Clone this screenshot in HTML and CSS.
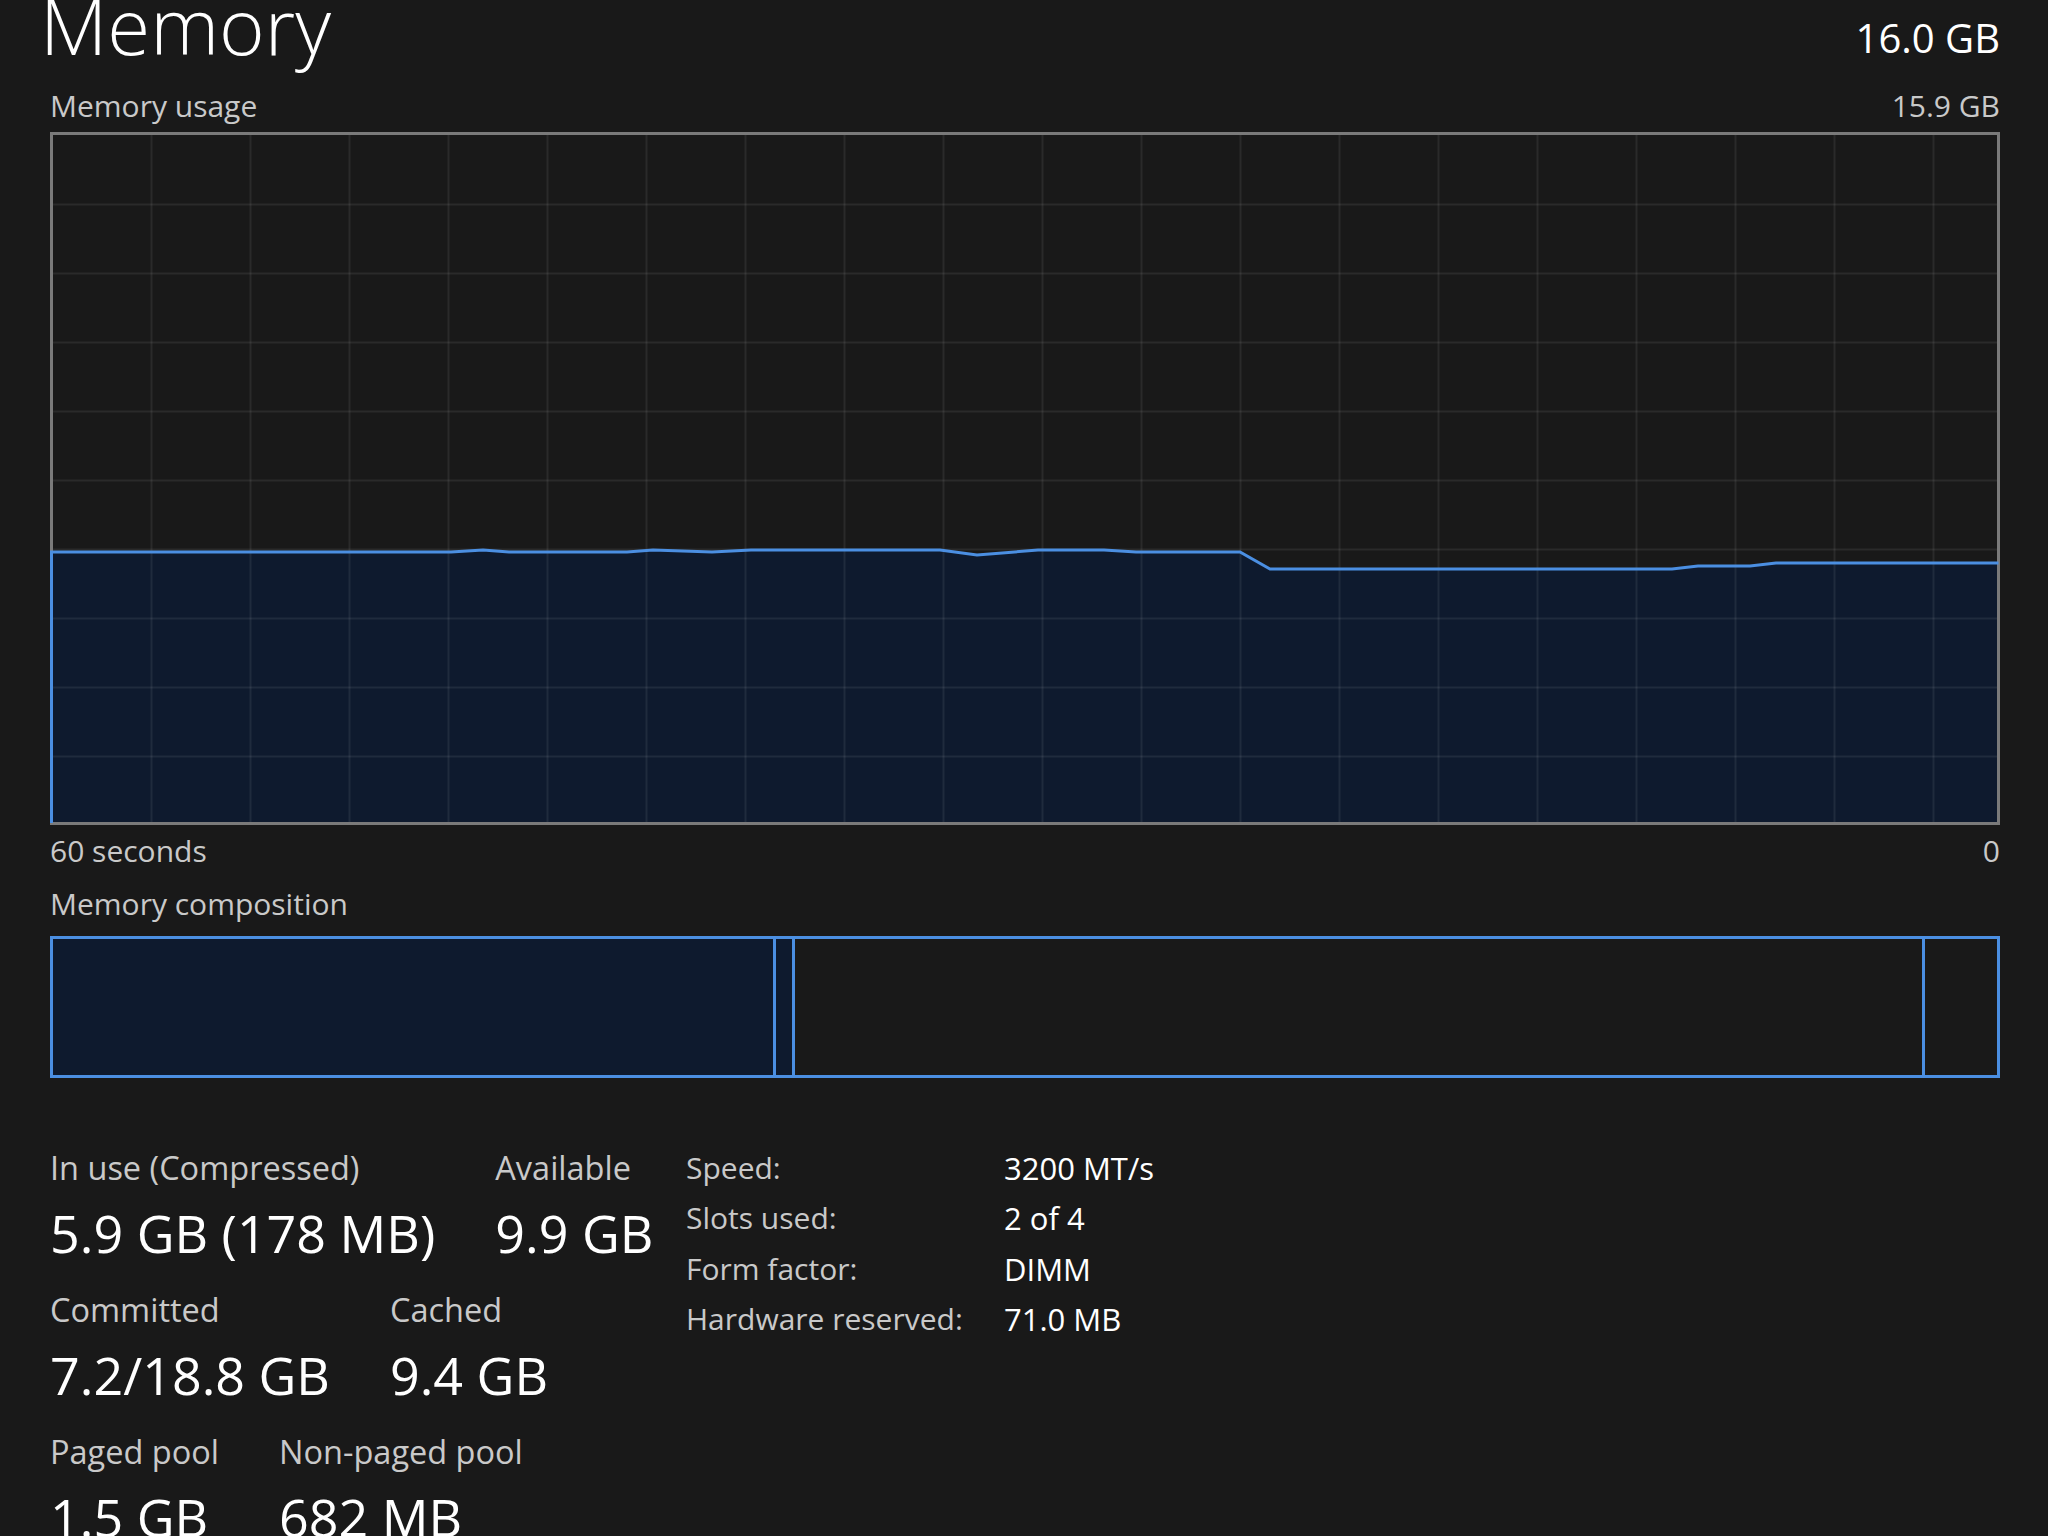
FILE: index.html
```html
<!DOCTYPE html>
<html lang="en">
<head>
  <meta charset="UTF-8">
  <title>Memory</title>
  <link rel="stylesheet" href="styles.css">
</head>
<body>
  <div class="page">
    <div class="header">
      <h1 class="title">Memory</h1>
      <span class="total">16.0 GB</span>
    </div>

    <div class="caption-row usage-row">
      <span>Memory usage</span>
      <span>15.9 GB</span>
    </div>

    <!-- usage graph, last 60 seconds -->
    <div class="graph">
      <svg viewBox="0 0 1950 693" preserveAspectRatio="none">
        <polygon class="usage-fill" points="1.5,420 401,420 433,418 459,420 577,420 603,418 662,420 701,418 890,418 927,423 988,418 1054,418 1086,420 1190,420 1220,437 1622,437 1648,434 1700,434 1726,431 1948.5,431 1948.5,690 1.5,690"/>
        <g class="grid">
          <path d="M101.5 3V690M200.5 3V690M299.5 3V690M398.5 3V690M497.5 3V690M596.5 3V690M695.5 3V690M794.5 3V690M893.5 3V690M992.5 3V690M1091.5 3V690M1190.5 3V690M1289.5 3V690M1388.5 3V690M1487.5 3V690M1586.5 3V690M1685.5 3V690M1784.5 3V690M1883.5 3V690"/>
          <path d="M3 72.5H1947M3 141.5H1947M3 210.5H1947M3 279.5H1947M3 348.5H1947M3 417.5H1947M3 486.5H1947M3 555.5H1947M3 624.5H1947"/>
        </g>
        <rect class="frame" x="1.5" y="1.5" width="1947" height="690"/>
        <polyline class="usage-line" points="1.5,691 1.5,420 401,420 433,418 459,420 577,420 603,418 662,420 701,418 890,418 927,423 988,418 1054,418 1086,420 1190,420 1220,437 1622,437 1648,434 1700,434 1726,431 1948.5,431"/>
      </svg>
    </div>

    <div class="caption-row axis-row">
      <span>60 seconds</span>
      <span>0</span>
    </div>

    <div class="caption-row comp-title">
      <span>Memory composition</span>
    </div>

    <!-- in use / modified / standby / free -->
    <div class="composition">
      <div class="segment used" style="width: 723px"></div>
      <div class="segment used" style="width: 19px"></div>
      <div class="segment" style="width: 1130px"></div>
      <div class="segment last"></div>
    </div>

    <div class="details">
      <div class="stats">
        <div class="stat-row">
          <div class="stat">
            <div class="stat-label">In use (Compressed)</div>
            <div class="stat-value">5.9 GB (178 MB)</div>
          </div>
          <div class="stat">
            <div class="stat-label">Available</div>
            <div class="stat-value">9.9 GB</div>
          </div>
        </div>
        <div class="stat-row">
          <div class="stat">
            <div class="stat-label">Committed</div>
            <div class="stat-value">7.2/18.8 GB</div>
          </div>
          <div class="stat">
            <div class="stat-label">Cached</div>
            <div class="stat-value">9.4 GB</div>
          </div>
        </div>
        <div class="stat-row">
          <div class="stat">
            <div class="stat-label">Paged pool</div>
            <div class="stat-value">1.5 GB</div>
          </div>
          <div class="stat">
            <div class="stat-label">Non-paged pool</div>
            <div class="stat-value">682 MB</div>
          </div>
        </div>
      </div>

      <dl class="hardware">
        <dt>Speed:</dt><dd>3200 MT/s</dd>
        <dt>Slots used:</dt><dd>2 of 4</dd>
        <dt>Form factor:</dt><dd>DIMM</dd>
        <dt>Hardware reserved:</dt><dd>71.0 MB</dd>
      </dl>
    </div>
  </div>
</body>
</html>
```

FILE: styles.css
```css
html, body {
  margin: 0;
  padding: 0;
  background: #191919;
}

body {
  font-family: "Open Sans", "Noto Sans", sans-serif;
  color: #ffffff;
  height: 1536px;
  overflow: hidden;
}

.page {
  padding: 0 48px 0 50px;
}

.header {
  display: flex;
  justify-content: space-between;
  align-items: baseline;
  height: 50px;
}

.title {
  margin: 0 0 0 -10px;
  font-size: 78px;
  font-weight: 300;
  line-height: 50px;
}

.total {
  font-size: 40px;
  line-height: 20px;
  position: relative;
  top: -2px;
}

.caption-row {
  display: flex;
  justify-content: space-between;
  font-size: 30px;
  line-height: 36px;
  color: #c9c9c9;
}

.usage-row {
  padding-top: 38px;
  margin-bottom: 8px;
}

.graph {
  height: 693px;
}

.graph svg {
  display: block;
  width: 100%;
  height: 100%;
}

.usage-fill {
  fill: #0e1a2e;
}

.grid path {
  fill: none;
  stroke: rgba(255, 255, 255, 0.075);
  stroke-width: 2;
}

.frame {
  fill: none;
  stroke: #7a7a7a;
  stroke-width: 3;
}

.usage-line {
  fill: none;
  stroke: #4b8fe2;
  stroke-width: 3;
}

.axis-row {
  margin-top: 8px;
}

.comp-title {
  margin-top: 17px;
}

.composition {
  display: flex;
  height: 136px;
  margin-top: 14px;
  border: 3px solid #4b8fe2;
}

.segment {
  box-sizing: border-box;
  border-right: 3px solid #4b8fe2;
  flex-shrink: 0;
}

.segment.used {
  background: #0e1a2e;
}

.segment.last {
  flex: 1;
  border-right: none;
}

.details {
  display: flex;
  margin-top: 72px;
}

.stats {
  width: 636px;
  flex-shrink: 0;
}

.stat-row {
  display: flex;
  gap: 60px;
  margin-bottom: 29px;
}

.stat-label {
  font-size: 32.5px;
  line-height: 36px;
  color: #c9c9c9;
  white-space: nowrap;
}

.stat-value {
  margin-top: 17px;
  font-size: 52px;
  line-height: 60px;
  white-space: nowrap;
}

.hardware {
  display: grid;
  grid-template-columns: 318px auto;
  row-gap: 14.3px;
  margin: 0;
  font-size: 30px;
  line-height: 36px;
  align-self: flex-start;
}

.hardware dt {
  color: #c9c9c9;
}

.hardware dd {
  margin: 0;
  font-size: 31px;
  color: #ffffff;
}
```
